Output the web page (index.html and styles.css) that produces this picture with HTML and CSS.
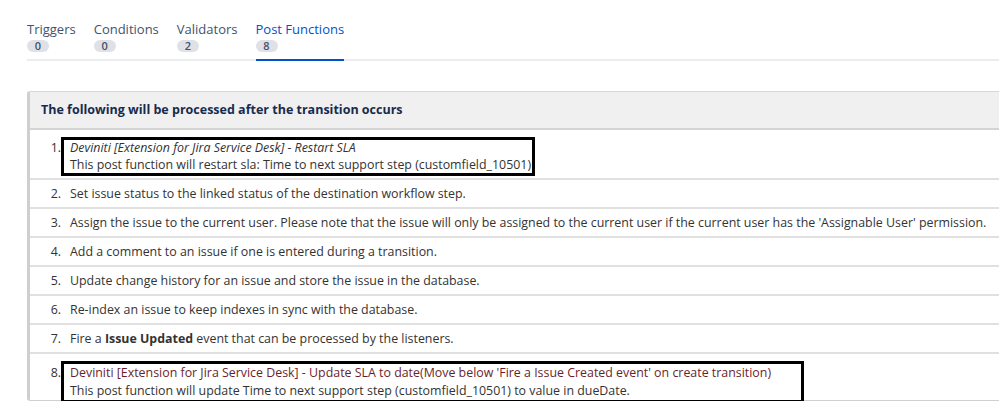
FILE: index.html
```html
<!DOCTYPE html>
<html>
<head>
<meta charset="utf-8">
<link rel="stylesheet" href="styles.css">
</head>
<body>
<div class="tabs">
  <div class="tab"><span class="tab-label">Triggers</span><span class="badge">0</span></div>
  <div class="tab"><span class="tab-label">Conditions</span><span class="badge">0</span></div>
  <div class="tab"><span class="tab-label">Validators</span><span class="badge">2</span></div>
  <div class="tab tab-active"><span class="tab-label">Post Functions</span><span class="badge">8</span></div>
</div>
<div class="panel">
  <div class="panel-head">The following will be processed after the transition occurs</div>
  <ol class="steps">
    <li class="step step-boxed step-first">
      <span class="num">1.</span>
      <div class="box box-first">
        <div class="em">Deviniti [Extension for Jira Service Desk] - Restart SLA</div>
        <div>This post function will restart sla: Time to next support step (customfield_10501)</div>
      </div>
    </li>
    <li class="step"><span class="num">2.</span><span class="txt">Set issue status to the linked status of the destination workflow step.</span></li>
    <li class="step"><span class="num">3.</span><span class="txt">Assign the issue to the current user. Please note that the issue will only be assigned to the current user if the current user has the 'Assignable User' permission.</span></li>
    <li class="step"><span class="num">4.</span><span class="txt">Add a comment to an issue if one is entered during a transition.</span></li>
    <li class="step"><span class="num">5.</span><span class="txt">Update change history for an issue and store the issue in the database.</span></li>
    <li class="step"><span class="num">6.</span><span class="txt">Re-index an issue to keep indexes in sync with the database.</span></li>
    <li class="step"><span class="num">7.</span><span class="txt">Fire a <b>Issue Updated</b> event that can be processed by the listeners.</span></li>
    <li class="step step-boxed step-last">
      <span class="num">8.</span>
      <div class="box box-last">
        <div class="maroon">Deviniti [Extension for Jira Service Desk] - Update SLA to date(Move below 'Fire a Issue Created event' on create transition)</div>
        <div>This post function will update Time to next support step (customfield_10501) to value in dueDate.</div>
      </div>
    </li>
  </ol>
</div>
</body>
</html>
```
FILE: styles.css
```css
html { overflow: hidden; }
body {
  margin: 0;
  font-family: "Open Sans", "Noto Sans", sans-serif;
  color: #333;
  background: #fff;
}
.tabs {
  display: flex;
  gap: 18px;
  margin-left: 27px;
  padding-top: 20px;
  border-bottom: 2px solid #ebecf0;
}
.tab {
  display: flex;
  flex-direction: column;
  align-items: flex-start;
  padding-bottom: 7px;
  margin-bottom: -2px;
  border-bottom: 2px solid transparent;
}
.tab-active { border-bottom-color: #0052cc; }
.tab-label {
  font-size: 13px;
  line-height: 18px;
  color: #42526e;
  font-weight: 500;
}
.tab-active .tab-label { color: #0052cc; }
.badge {
  margin-top: 2px;
  min-width: 22px;
  height: 12px;
  border-radius: 6px;
  background: #dfe1e6;
  color: #42526e;
  font-size: 11px;
  line-height: 12px;
  text-align: center;
  font-weight: 600;
}
.panel {
  margin: 30px 0 0 27px;
  border-left: 3px solid #cfcfcf;
  border-top: 1px solid #d8d8d8;
  border-bottom: 1px solid #d0d0d0;
  border-radius: 3px 0 0 3px;
}
.panel-head {
  background: #f0f0f0;
  font-weight: 700;
  font-size: 12.5px;
  line-height: 18px;
  padding: 9px 11px 9px;
  border-bottom: 2px solid #d5d5d5;
  color: #172b4d;
}
.steps {
  list-style: none;
  margin: 0;
  padding: 0;
  font-size: 12.4px;
}
.step {
  display: flex;
  align-items: flex-start;
  line-height: 18px;
  padding: 5px 0 4px;
  border-bottom: 2px solid #e0e0e0;
}
.step:last-child { border-bottom: none; }
.step-boxed { align-items: baseline; }
.num {
  width: 31px;
  flex: none;
  text-align: right;
}
.txt { margin-left: 9px; white-space: nowrap; }
.step-first { padding: 7px 0 2px; }
.step-last { padding: 7px 0 0; }
.box {
  margin-left: 0;
  border: 3px solid #000;
  padding: 0 1px 0 6px;
  white-space: nowrap;
}
.box-first { line-height: 16.5px; }
.box-last {
  line-height: 18px;
  padding-right: 30px;
  margin-bottom: -3px;
}
.em { font-style: italic; }
.maroon { color: #6a1f2e; }
b { font-weight: 700; }
```
